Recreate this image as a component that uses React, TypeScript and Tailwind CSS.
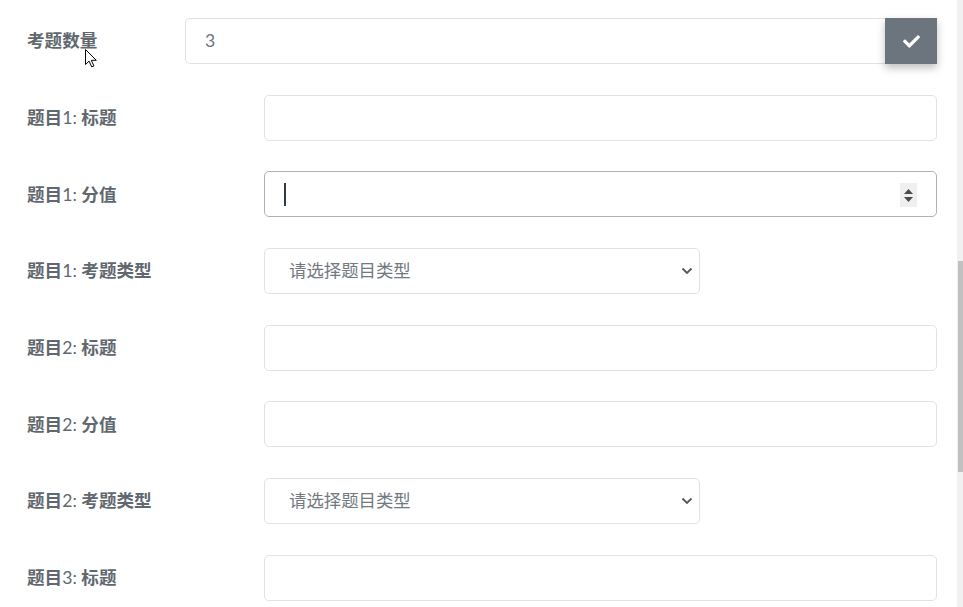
import React from 'react';
import { FaCheck } from 'react-icons/fa';

const labelFont = { fontFamily: 'Lato, "Noto Sans CJK SC", sans-serif' };

const Etiqueta = ({ n, texto, ancho }: { n?: number; texto: string; ancho: string }) => (
  <label className={`${ancho} shrink-0 pt-[1px] text-[17.6px] font-bold text-[#60676e]`}>
    {n !== undefined && (
      <>
        题目<span className="font-normal">{n}: </span>
      </>
    )}
    {texto}
  </label>
);

const Campo = ({ focused = false }: { focused?: boolean }) => (
  <div
    className={`relative h-[46px] flex-1 rounded-[5px] border bg-white ${
      focused ? 'border-[#a9b3bd]' : 'border-[#dfe3e8]'
    }`}
  >
    {focused && (
      <>
        <span className="absolute left-[19px] top-[11px] h-[23px] w-[2px] bg-[#333a40]" />
        <span className="absolute right-[19px] top-[11px] flex h-[24px] w-[17px] flex-col items-center justify-center gap-[3px] bg-[#efefef]">
          <svg width="9" height="5" viewBox="0 0 9 5"><path d="M4.5 0L9 5H0z" fill="#4a4a4a" /></svg>
          <svg width="9" height="5" viewBox="0 0 9 5"><path d="M0 0h9L4.5 5z" fill="#4a4a4a" /></svg>
        </span>
      </>
    )}
  </div>
);

const Selector = () => (
  <div className="relative flex h-[46px] w-[436px] items-center rounded-[5px] border border-[#dfe3e8] bg-white pl-[24px]">
    <span className="text-[17.4px] text-[#72797f]">请选择题目类型</span>
    <svg className="absolute right-[6px] top-[18px]" width="12" height="8" viewBox="0 0 12 8">
      <path d="M1.5 1.5L6 6l4.5-4.5" fill="none" stroke="#555" strokeWidth="1.8" />
    </svg>
  </div>
);

export default function App() {
  const preguntas = [1, 2];

  return (
    <div className="flex h-[607px] w-[963px] overflow-hidden bg-white" style={labelFont}>
      <div className="relative flex flex-1 flex-col gap-[30.67px] pl-[27px] pr-[20px] pt-[18px]">
        <div className="flex items-center">
          <Etiqueta texto="考题数量" ancho="w-[158px]" />
          <div className="flex h-[46px] flex-1">
            <div className="flex flex-1 items-center rounded-l-[5px] border border-r-0 border-[#dfe3e8] pl-[19px]">
              <span className="text-[17.6px] text-[#6c757d]">3</span>
            </div>
            <button className="flex h-[46px] w-[52px] items-center justify-center bg-[#6c757d] text-white shadow-[0_4px_8px_rgba(0,0,0,0.25)]">
              <FaCheck size={17} />
            </button>
          </div>
        </div>

        {preguntas.map((n) => (
          <React.Fragment key={n}>
            <div className="flex items-center">
              <Etiqueta n={n} texto="标题" ancho="w-[237px]" />
              <Campo />
            </div>
            <div className="flex items-center">
              <Etiqueta n={n} texto="分值" ancho="w-[237px]" />
              <Campo focused={n === 1} />
            </div>
            <div className="flex items-center">
              <Etiqueta n={n} texto="考题类型" ancho="w-[237px]" />
              <Selector />
            </div>
          </React.Fragment>
        ))}

        <div className="flex items-center">
          <Etiqueta n={3} texto="标题" ancho="w-[237px]" />
          <Campo />
        </div>

        {/* puntero del mouse */}
        <svg className="absolute left-[85px] top-[49px]" width="12" height="19" viewBox="0 0 12 19">
          <path d="M0.5 0.5v15l3.6-3.4 2.6 5.8 2.2-1-2.6-5.6h5z" fill="#fff" stroke="#000" strokeWidth="1" />
        </svg>
      </div>
      <div className="flex w-[6px] flex-col bg-[#f1f1f1] pt-[261px]">
        <div className="ml-[1px] h-[211px] bg-[#c1c1c1]" />
      </div>
    </div>
  );
}
